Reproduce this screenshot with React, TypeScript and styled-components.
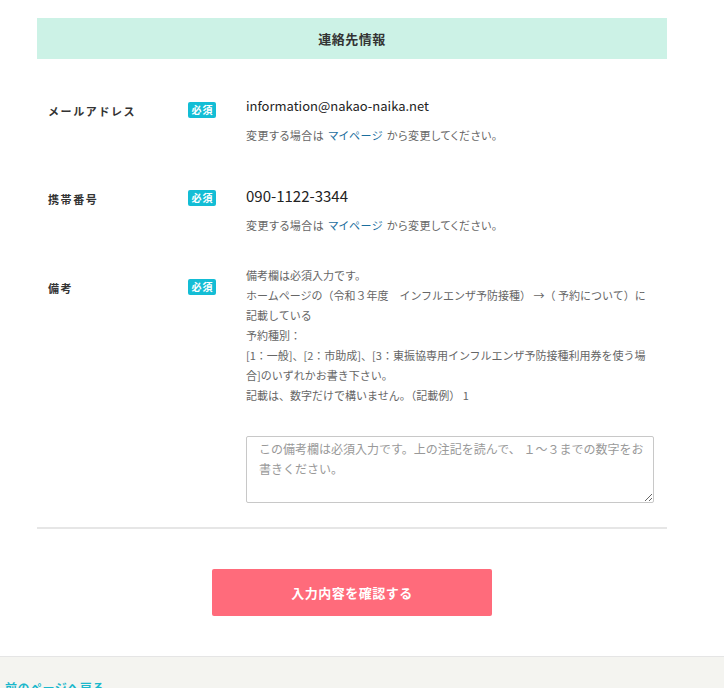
import styled, { createGlobalStyle } from "styled-components";

const GlobalStyle = createGlobalStyle`
  html, body {
    margin: 0;
    padding: 0;
    background: #fff;
    font-family: "Noto Sans CJK JP", "Noto Sans", sans-serif;
    color: #333;
  }
  * { box-sizing: border-box; }
`;

const Main = styled.main`
  width: 704px;
  padding: 18px 37px 0;
`;

const SectionTitle = styled.h2`
  margin: 0;
  height: 41px;
  background: #ccf2e6;
  display: flex;
  align-items: center;
  justify-content: center;
  font-size: 13px;
  font-weight: 700;
  color: #333;
  letter-spacing: 0.5px;
`;

const Row = styled.div<{ $top: number; $labelTop: number }>`
  display: grid;
  grid-template-columns: 140px 58px 410px;
  padding: ${({ $top }) => $top}px 0 0 11px;

  & > :nth-child(1),
  & > :nth-child(2) {
    margin-top: ${({ $labelTop }) => $labelTop}px;
  }
`;

const Label = styled.div`
  font-size: 11px;
  line-height: 20px;
  font-weight: 700;
  letter-spacing: 1.6px;
  color: #333;
`;

const BadgeCell = styled.div`
  display: flex;
  align-items: flex-start;
  padding-top: 1px;
`;

const Badge = styled.span`
  display: flex;
  align-items: center;
  justify-content: center;
  width: 28px;
  height: 16px;
  border-radius: 2px;
  background: #13bdd5;
  color: #fff;
  font-size: 10px;
  line-height: 16px;
  font-weight: 700;
  letter-spacing: 1px;
  padding-left: 1px;
`;

const Value = styled.div<{ $size?: number }>`
  font-size: ${({ $size }) => $size ?? 13}px;
  line-height: 20px;
  color: #222;
`;

const Note = styled.p`
  margin: 9px 0 0;
  font-size: 11px;
  line-height: 20px;
  color: #666;
  letter-spacing: 0.5px;
  font-feature-settings: "palt";
`;

const Link = styled.a`
  color: #1a6e9e;
  text-decoration: none;
  margin: 0 4px;
`;

const Remarks = styled.p`
  margin: 0;
  font-size: 11px;
  line-height: 20px;
  color: #666;
`;

const TextArea = styled.textarea`
  display: block;
  width: 408px;
  height: 67px;
  margin-top: 31px;
  padding: 2px 8px 2px 12px;
  border: 1px solid #c8c8c8;
  border-radius: 2px;
  font-family: inherit;
  font-size: 12px;
  line-height: 20px;
  color: #333;
  resize: vertical;
  &::placeholder {
    color: #999;
  }
`;

const Divider = styled.hr`
  margin: 24px 0 0;
  border: none;
  height: 2px;
  background: #e6e6e6;
`;

const Actions = styled.div`
  display: flex;
  justify-content: center;
  padding: 40px 0 40px;
`;

const SubmitButton = styled.button`
  width: 280px;
  height: 47px;
  border: none;
  border-radius: 2px;
  background: #ff6b7b;
  color: #fff;
  font-family: inherit;
  font-size: 13px;
  font-weight: 700;
  letter-spacing: 0.5px;
  cursor: pointer;
`;

const Footer = styled.footer`
  border-top: 1px solid #e5e5e5;
  background: #f4f4f0;
  padding: 17px 5px 20px;
`;

const BackLink = styled.a`
  font-size: 12px;
  font-weight: 700;
  color: #1bb8cc;
  text-decoration: none;
  letter-spacing: 0.5px;
`;

const remarks = [
  "備考欄は必須入力です。",
  "ホームページの（令和３年度　インフルエンザ予防接種） →（ 予約について）に記載している",
  "予約種別：",
  "[1：一般]、[2：市助成]、[3：東振協専用インフルエンザ予防接種利用券を使う場合]のいずれかお書き下さい。",
  "記載は、数字だけで構いません。（記載例） 1",
];

function ChangeNote() {
  return (
    <Note>
      変更する場合は<Link href="#">マイページ</Link>から変更してください。
    </Note>
  );
}

export default function App() {
  return (
    <>
      <GlobalStyle />
      <Main>
        <SectionTitle>連絡先情報</SectionTitle>

        <Row $top={37} $labelTop={5}>
          <Label>メールアドレス</Label>
          <BadgeCell>
            <Badge>必須</Badge>
          </BadgeCell>
          <div>
            <Value>information@nakao-naika.net</Value>
            <ChangeNote />
          </div>
        </Row>

        <Row $top={41} $labelTop={3}>
          <Label>携帯番号</Label>
          <BadgeCell>
            <Badge>必須</Badge>
          </BadgeCell>
          <div>
            <Value $size={15}>090-1122-3344</Value>
            <ChangeNote />
          </div>
        </Row>

        <Row $top={30} $labelTop={13}>
          <Label>備考</Label>
          <BadgeCell>
            <Badge>必須</Badge>
          </BadgeCell>
          <div>
            {remarks.map((line, i) => (
              <Remarks key={i}>{line}</Remarks>
            ))}
            <TextArea placeholder="この備考欄は必須入力です。上の注記を読んで、 １〜３までの数字をお書きください。" />
          </div>
        </Row>

        <Divider />

        <Actions>
          <SubmitButton>入力内容を確認する</SubmitButton>
        </Actions>
      </Main>
      <Footer>
        <BackLink href="#">前のページへ戻る</BackLink>
      </Footer>
    </>
  );
}
